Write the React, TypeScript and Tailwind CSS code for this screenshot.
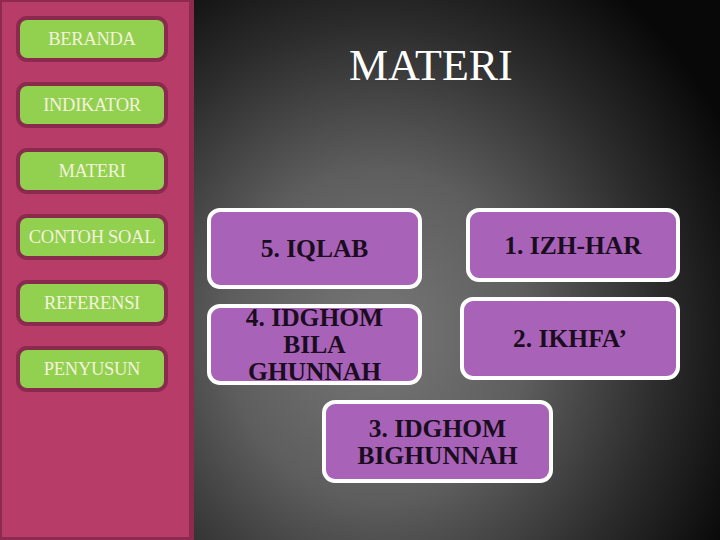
import React from 'react';

const menu = ['BERANDA', 'INDIKATOR', 'MATERI', 'CONTOH SOAL', 'REFERENSI', 'PENYUSUN'];

function MenuButton({ label }: { label: string }) {
  return (
    <div className="w-[152px] h-[46px] rounded-[11px] border-4 border-[#8b2a4f] bg-[#92d050] flex items-center justify-center text-[18.5px] leading-none text-[#f4f2dc] tracking-[-0.3px]">
      {label}
    </div>
  );
}

function Box({ children, className }: { children: React.ReactNode; className: string }) {
  return (
    <div
      className={`rounded-[13px] border-4 border-white bg-[#a863b9] overflow-hidden flex items-center justify-center text-center font-bold text-[25.5px] leading-[27px] text-[#1b0d20] ${className}`}
    >
      <div>{children}</div>
    </div>
  );
}

export default function App() {
  return (
    <div
      className="w-[720px] h-[540px] flex overflow-hidden"
      style={{ fontFamily: '"Liberation Serif", "Times New Roman", serif' }}
    >
      <aside className="w-[194px] h-full shrink-0 bg-[#b83c68] border-l-2 border-t-2 border-b-[3px] border-r-[5px] border-[#8e2a50] pl-[14px] pt-[14px] flex flex-col gap-[20px]">
        {menu.map((m) => (
          <MenuButton key={m} label={m} />
        ))}
      </aside>

      <main className="flex-1 h-full bg-[radial-gradient(ellipse_75%_80%_at_35%_62%,#777777_0%,#5e5e5e_38%,#2c2c2c_72%,#080808_100%)]">
        <h1 className="pt-[44px] pl-[155px] text-[44px] leading-[44px] text-white">MATERI</h1>

        <div className="mt-[120px] flex">
          <Box className="ml-[13px] w-[215px] h-[81px]">5. IQLAB</Box>
          <Box className="ml-[44px] w-[214px] h-[74px]">1. IZH-HAR</Box>
        </div>

        <div className="mt-[14px] flex">
          <Box className="ml-[13px] mt-[1px] w-[215px] h-[81px]">
            4. IDGHOM
            <br />
            BILA
            <br />
            GHUNNAH
          </Box>
          <Box className="ml-[38px] -mt-[6px] w-[220px] h-[83px]">2. IKHFA’</Box>
        </div>

        <div className="mt-[15px] flex">
          <Box className="ml-[128px] w-[231px] h-[83px]">
            3. IDGHOM
            <br />
            BIGHUNNAH
          </Box>
        </div>
      </main>
    </div>
  );
}
